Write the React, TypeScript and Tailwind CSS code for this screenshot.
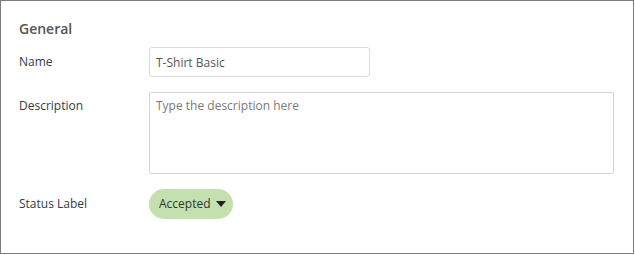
import React from 'react'

const font = { fontFamily: '"Open Sans", "Noto Sans", sans-serif' }

const Row = ({ label, children, top }: { label: string; children: React.ReactNode; top?: boolean }) => (
  <div className={`flex ${top ? 'items-start' : 'items-center'}`}>
    <div className={`w-[130px] shrink-0 text-[12px] text-[#333b46] ${top ? 'pt-[5px]' : ''}`}>{label}</div>
    {children}
  </div>
)

const App = () => {
  return (
    <div className="bg-white w-[635px] h-[255px]" style={font}>
      <div className="w-[634px] h-[254px] border border-[#7c7c7c] bg-white pl-[18px] pt-[16px]">
        <h2 className="mt-[2px] text-[14px] font-semibold text-[#555] leading-[20px]">General</h2>
        <div className="mt-[8px] flex flex-col gap-[15px]">
          <Row label="Name">
            <input
              defaultValue="T-Shirt Basic"
              className="w-[221px] h-[30px] rounded-[3px] border border-[#dcdcdc] px-[6px] text-[12px] text-[#555] outline-none"
              style={font}
            />
          </Row>
          <Row label="Description" top>
            <textarea
              placeholder="Type the description here"
              className="w-[465px] h-[82px] rounded-[2px] border border-[#d6d6d6] px-[6px] py-[4px] text-[12px] text-[#555] placeholder:text-[#7a7a7a] outline-none resize-none"
              style={font}
            />
          </Row>
          <Row label="Status Label">
            <button className="flex items-center gap-[5px] h-[30px] rounded-full bg-[#c3e0ae] pl-[10px] pr-[7px] text-[12px] text-[#333]">
              Accepted
              <svg width="10" height="6" viewBox="0 0 10 6">
                <path d="M0 0h10L5 6z" fill="#222" />
              </svg>
            </button>
          </Row>
        </div>
      </div>
    </div>
  )
}

export default App
